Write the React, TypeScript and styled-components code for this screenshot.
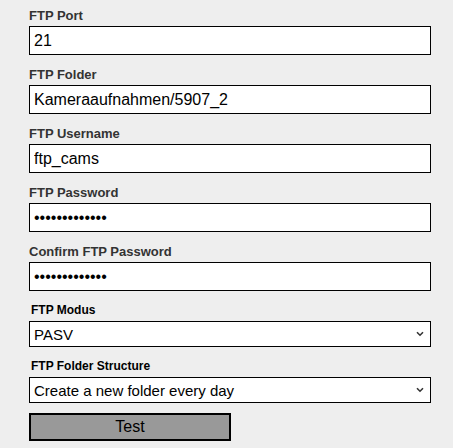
import React from "react";
import styled, { createGlobalStyle } from "styled-components";

const Global = createGlobalStyle`
  html, body {
    margin: 0;
    padding: 0;
    background: #eeeeee;
  }
  body {
    font-family: "Liberation Sans", Arial, sans-serif;
  }
`;

const Form = styled.form`
  display: flex;
  flex-direction: column;
  padding: 8px 22px 0 29px;
  width: 402px;
`;

const Field = styled.div<{ $gap?: number }>`
  display: flex;
  flex-direction: column;
  margin-bottom: ${(p) => p.$gap ?? 12}px;
`;

const Label = styled.label`
  display: block;
  font-size: 13px;
  line-height: 15px;
  font-weight: bold;
  color: #333333;
  margin-bottom: 3px;
`;

const SmallLabel = styled.label`
  display: block;
  font-size: 12px;
  line-height: 14px;
  font-weight: bold;
  color: #000000;
  margin: 0 0 4px 2px;
`;

const TextInput = styled.input`
  box-sizing: border-box;
  width: 402px;
  height: 29px;
  margin: 0;
  padding: 0 4px;
  border: 1px solid #000;
  border-radius: 0;
  background: #fff;
  font-family: "Liberation Sans", Arial, sans-serif;
  font-size: 16px;
  color: #000;
  outline: none;
`;

const SelectWrap = styled.div`
  position: relative;
  width: 402px;
  height: 26px;
`;

const Select = styled.select`
  box-sizing: border-box;
  appearance: none;
  -webkit-appearance: none;
  width: 402px;
  height: 26px;
  margin: 0;
  padding: 0 24px 0 4px;
  border: 1px solid #000;
  border-radius: 0;
  background-color: #fff;
  font-family: "Liberation Sans", Arial, sans-serif;
  font-size: 15px;
  color: #000;
  outline: none;
`;

const Chevron = styled.svg`
  position: absolute;
  right: 7px;
  top: 10px;
  width: 8px;
  height: 6px;
  pointer-events: none;
`;

const Button = styled.button`
  box-sizing: border-box;
  width: 202px;
  height: 28px;
  margin: 0;
  padding: 0;
  border: 2px solid #000;
  border-radius: 0;
  background: #999999;
  font-family: "Liberation Sans", Arial, sans-serif;
  font-size: 16px;
  color: #000;
  cursor: pointer;
`;

function Dropdown({ value, options }: { value: string; options: [string, string][] }) {
  return (
    <SelectWrap>
      <Select defaultValue={value}>
        {options.map(([v, t]) => (
          <option key={v} value={v}>
            {t}
          </option>
        ))}
      </Select>
      <Chevron viewBox="0 0 8 6">
        <path d="M1 1.2 L4 4.2 L7 1.2" fill="none" stroke="#333" strokeWidth="1.6" />
      </Chevron>
    </SelectWrap>
  );
}

export default function App() {
  return (
    <>
      <Global />
      <Form onSubmit={(e) => e.preventDefault()}>
        <Field>
          <Label>FTP Port</Label>
          <TextInput type="text" defaultValue="21" />
        </Field>
        <Field>
          <Label>FTP Folder</Label>
          <TextInput type="text" defaultValue="Kameraaufnahmen/5907_2" />
        </Field>
        <Field>
          <Label>FTP Username</Label>
          <TextInput type="text" defaultValue="ftp_cams" />
        </Field>
        <Field>
          <Label>FTP Password</Label>
          <TextInput type="password" defaultValue="abcdefghijklm" />
        </Field>
        <Field>
          <Label>Confirm FTP Password</Label>
          <TextInput type="password" defaultValue="abcdefghijklm" />
        </Field>
        <Field>
          <SmallLabel>FTP Modus</SmallLabel>
          <Dropdown value="pasv" options={[["pasv", "PASV"], ["port", "PORT"]]} />
        </Field>
        <Field $gap={10}>
          <SmallLabel>FTP Folder Structure</SmallLabel>
          <Dropdown
            value="day"
            options={[["day", "Create a new folder every day"], ["none", "No folder structure"]]}
          />
        </Field>
        <Button type="button">Test</Button>
      </Form>
    </>
  );
}
